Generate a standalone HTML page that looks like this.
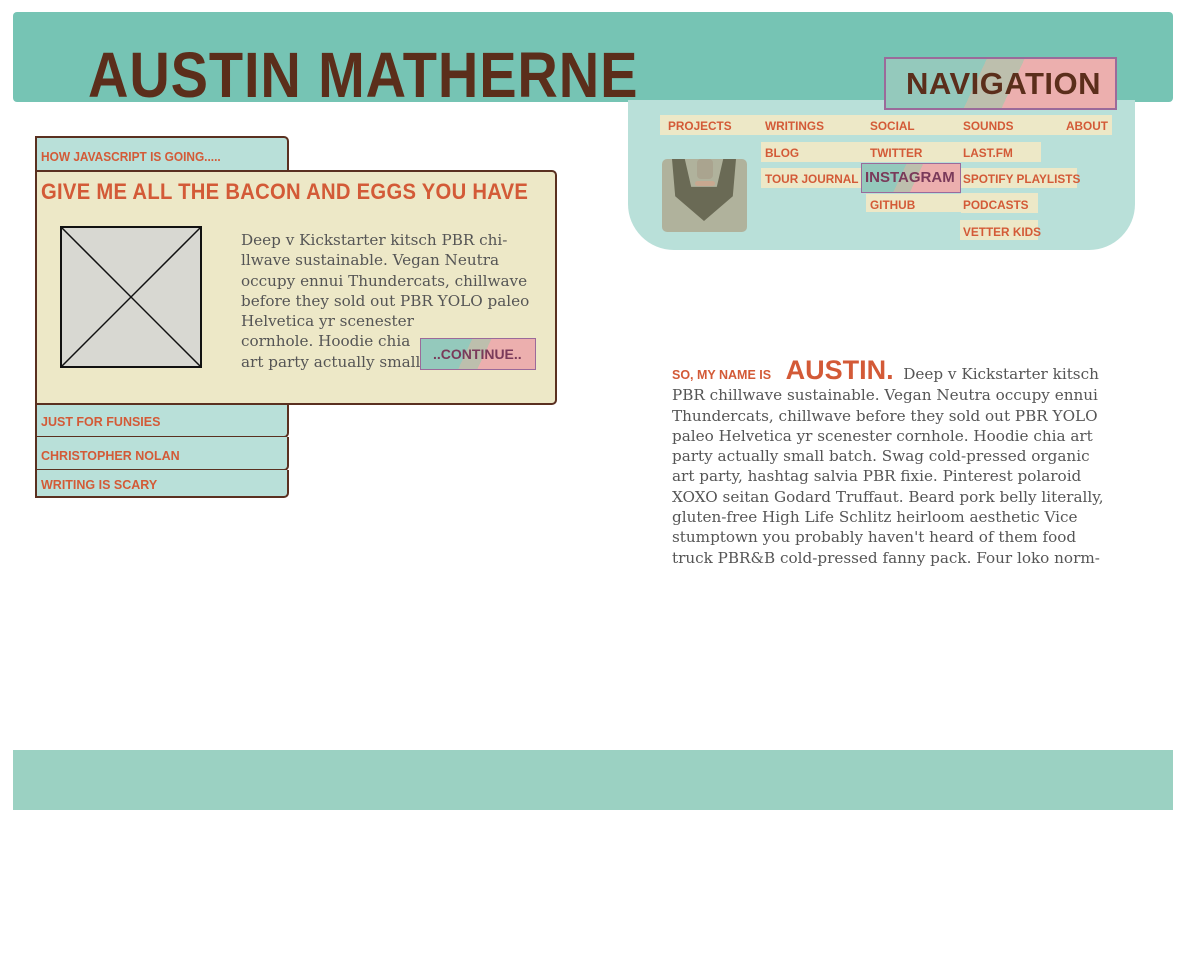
<!DOCTYPE html>
<html><head><meta charset="utf-8"><style>
*{margin:0;padding:0;box-sizing:border-box}
body{width:1185px;height:956px;background:#fff;position:relative;overflow:hidden;font-family:"Liberation Sans",sans-serif}
.a{position:absolute}
.d{font-family:"Liberation Sans",sans-serif;font-weight:bold;text-transform:uppercase;white-space:nowrap}
.o{color:#d35a37}
.s{font-family:"DejaVu Serif","Liberation Serif",serif;color:#555;font-size:15.2px;line-height:20.3px;letter-spacing:0px;white-space:nowrap}
.y{background:#ede8c7}
.nv{font-size:11.8px;color:#d35a37;letter-spacing:0}
.grad{background:linear-gradient(115deg,#94c9bc 0,#94c9bc 40%,#bdbfad 40%,#bdbfad 55%,#ecafae 55%);border:2px solid #9b6a9a}
.tab{background:#b9e0d9;border:2px solid #5a3020;border-top:none;border-radius:0 0 5px 0;left:35px;width:254px}
.tab span{position:absolute;left:4px;font-size:12.5px;color:#d35a37}
</style></head><body>
<div class="a" style="left:13px;top:12px;width:1160px;height:90px;background:#76c4b4;border-radius:4px"></div>
<div class="a d" style="left:88px;top:38px;font-size:64px;color:#5b2e1b;letter-spacing:1px;transform:scaleX(0.875);transform-origin:left">Austin Matherne</div>
<div class="a" style="left:628px;top:100px;width:507px;height:150px;background:#b9e0d9;border-radius:0 0 46px 46px"></div>
<div class="a grad" style="left:884px;top:57px;width:233px;height:53px"></div>
<div class="a d" style="left:906px;top:66px;font-size:31px;color:#5b2e1b;letter-spacing:0.5px">Navigation</div>
<div class="a y" style="left:660px;top:115px;width:452px;height:20px"></div>
<div class="a d nv" style="left:668px;top:119px">Projects</div>
<div class="a d nv" style="left:765px;top:119px">Writings</div>
<div class="a d nv" style="left:870px;top:119px">Social</div>
<div class="a d nv" style="left:963px;top:119px">Sounds</div>
<div class="a d nv" style="left:1066px;top:119px">About</div>
<div class="a y" style="left:761px;top:142px;width:280px;height:20px"></div>
<div class="a y" style="left:761px;top:168px;width:100px;height:20px"></div>
<div class="a y" style="left:961px;top:168px;width:116px;height:20px"></div>
<div class="a y" style="left:866px;top:194px;width:95px;height:18px"></div>
<div class="a y" style="left:961px;top:193px;width:77px;height:20px"></div>
<div class="a y" style="left:960px;top:220px;width:78px;height:20px"></div>
<div class="a grad" style="left:861px;top:163px;width:100px;height:30px;border-width:1px"></div>
<div class="a d nv" style="left:765px;top:146px">Blog</div>
<div class="a d nv" style="left:870px;top:146px">Twitter</div>
<div class="a d nv" style="left:963px;top:146px">Last.fm</div>
<div class="a d nv" style="left:765px;top:172px">Tour Journal</div>
<div class="a d" style="left:865px;top:169px;font-size:15px;color:#7a3a5a">Instagram</div>
<div class="a d nv" style="left:963px;top:172px">Spotify Playlists</div>
<div class="a d nv" style="left:870px;top:198px">Github</div>
<div class="a d nv" style="left:963px;top:198px">Podcasts</div>
<div class="a d nv" style="left:963px;top:225px">Vetter Kids</div>
<div class="a" style="left:662px;top:159px;width:85px;height:73px;background:#b0b29c;border-radius:5px;overflow:hidden">
<div class="a" style="left:10px;top:0;width:64px;height:62px;background:#6a6a55;clip-path:polygon(0 0,20% 0,30% 45%,70% 45%,80% 0,100% 0,95% 60%,50% 100%,5% 60%)"></div>
<div class="a" style="left:35px;top:0;width:16px;height:20px;background:#aaa48f;border-radius:4px"></div>
<div class="a" style="left:33px;top:22px;width:20px;height:5px;background:#c8a890;border-radius:3px"></div>
</div>
<div class="a" style="left:35px;top:136px;width:254px;height:40px;background:#b9e0d9;border:2px solid #5a3020;border-radius:0 5px 0 0"></div>
<div class="a d o" style="left:41px;top:150px;font-size:12.5px;transform:scaleX(0.95);transform-origin:left">How Javascript is going.....</div>
<div class="a" style="left:35px;top:170px;width:522px;height:235px;background:#ede8c7;border:2px solid #5a3020;border-radius:0 5px 5px 0"></div>
<div class="a d o" style="left:41px;top:179px;font-size:22px;letter-spacing:0.3px;transform:scaleX(0.92);transform-origin:left">Give me all the bacon and eggs you have</div>
<svg class="a" style="left:60px;top:226px" width="142" height="142"><rect x="1" y="1" width="140" height="140" fill="#d8d8d2" stroke="#111" stroke-width="2"/><line x1="1" y1="1" x2="141" y2="141" stroke="#111" stroke-width="1.5"/><line x1="141" y1="1" x2="1" y2="141" stroke="#111" stroke-width="1.5"/></svg>
<div class="a s" style="left:241px;top:230px;width:300px">Deep v Kickstarter kitsch PBR chi-<br>llwave sustainable. Vegan Neutra<br>occupy ennui Thundercats, chillwave<br>before they sold out PBR YOLO paleo<br>Helvetica yr scenester<br>cornhole. Hoodie chia<br>art party actually small</div>
<div class="a grad" style="left:420px;top:338px;width:116px;height:32px;border-width:1px"></div>
<div class="a d" style="left:433px;top:346px;font-size:14px;color:#7a3a5a">..Continue..</div>
<div class="a tab" style="top:405px;height:33px"><span style="top:10px" class="d">Just for funsies</span></div>
<div class="a tab" style="top:437px;height:34px"><span style="top:12px" class="d">Christopher Nolan</span></div>
<div class="a tab" style="top:470px;height:28px"><span style="top:8px" class="d">Writing is scary</span></div>
<div class="a s" style="left:672px;top:360px;width:440px"><span class="d o" style="font-family:'Liberation Sans',sans-serif;font-size:12.5px;letter-spacing:0">So, my name is</span>&nbsp;&nbsp; <span class="d o" style="font-family:'Liberation Sans',sans-serif;font-size:27px;line-height:20px">Austin.</span>&nbsp; Deep v Kickstarter kitsch<br>PBR chillwave sustainable. Vegan Neutra occupy ennui<br>Thundercats, chillwave before they sold out PBR YOLO<br>paleo Helvetica yr scenester cornhole. Hoodie chia art<br>party actually small batch. Swag cold-pressed organic<br>art party, hashtag salvia PBR fixie. Pinterest polaroid<br>XOXO seitan Godard Truffaut. Beard pork belly literally,<br>gluten-free High Life Schlitz heirloom aesthetic Vice<br>stumptown you probably haven't heard of them food<br>truck PBR&amp;B cold-pressed fanny pack. Four loko norm-</div>
<div class="a" style="left:13px;top:750px;width:1160px;height:60px;background:#9bd1c2"></div>
</body></html>
